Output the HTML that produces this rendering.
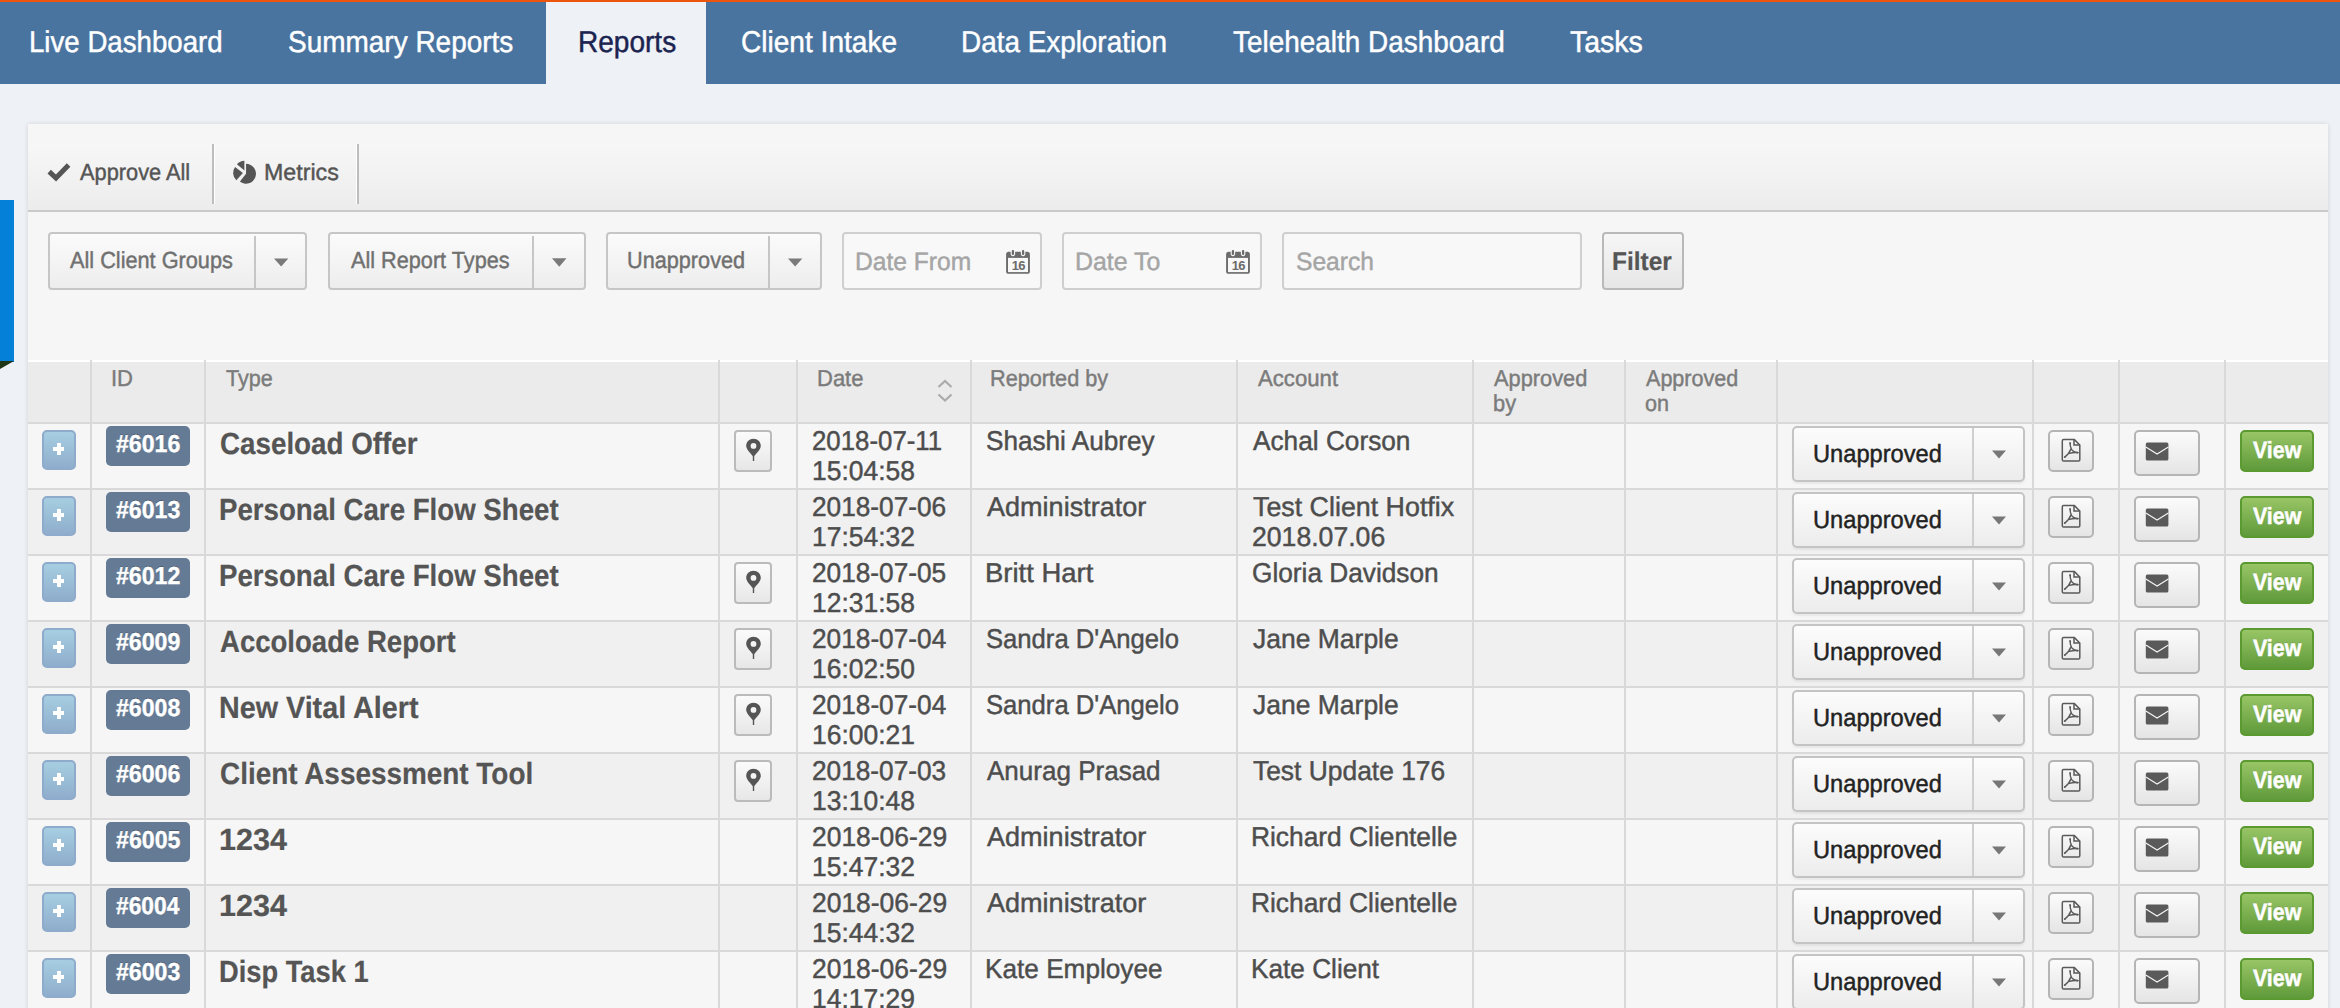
<!DOCTYPE html>
<html><head><meta charset="utf-8"><title>Reports</title>
<style>
html,body{margin:0;padding:0;}
body{width:2340px;height:1008px;overflow:hidden;position:relative;background:#eef1f5;font-family:"Liberation Sans", sans-serif;}
.r{position:absolute;}
.t{position:absolute;white-space:nowrap;line-height:1;transform-origin:0 0;text-rendering:geometricPrecision;}
svg.r{overflow:visible;}
</style></head><body>
<div class="r" style="left:0px;top:0px;width:2340px;height:84px;background:#4a74a0;"></div>
<div class="r" style="left:546px;top:0px;width:160px;height:84px;background:#eef1f5;"></div>
<div class="r" style="left:0px;top:0px;width:2340px;height:2px;background:#ec550b;"></div>
<div id="nav1" class="t" style="left:29.30px;top:28.00px;font-size:30px;color:#ffffff;font-weight:400;transform:scaleX(0.9212);-webkit-text-stroke:0.45px #ffffff;">Live Dashboard</div>
<div id="nav2" class="t" style="left:287.80px;top:28.00px;font-size:30px;color:#ffffff;font-weight:400;transform:scaleX(0.9321);-webkit-text-stroke:0.45px #ffffff;">Summary Reports</div>
<div id="nav3" class="t" style="left:577.60px;top:28.00px;font-size:30px;color:#1b2350;font-weight:400;transform:scaleX(0.9344);-webkit-text-stroke:0.45px #1b2350;">Reports</div>
<div id="nav4" class="t" style="left:741.20px;top:28.00px;font-size:30px;color:#ffffff;font-weight:400;transform:scaleX(0.9359);-webkit-text-stroke:0.45px #ffffff;">Client Intake</div>
<div id="nav5" class="t" style="left:961.00px;top:28.00px;font-size:30px;color:#ffffff;font-weight:400;transform:scaleX(0.9293);-webkit-text-stroke:0.45px #ffffff;">Data Exploration</div>
<div id="nav6" class="t" style="left:1232.80px;top:28.00px;font-size:30px;color:#ffffff;font-weight:400;transform:scaleX(0.9310);-webkit-text-stroke:0.45px #ffffff;">Telehealth Dashboard</div>
<div id="nav7" class="t" style="left:1570.30px;top:28.00px;font-size:30px;color:#ffffff;font-weight:400;transform:scaleX(0.9492);-webkit-text-stroke:0.45px #ffffff;">Tasks</div>
<div class="r" style="left:0px;top:200px;width:14px;height:162px;background:#0580d8;"></div>
<svg class="r" style="left:0;top:361px" width="15" height="9"><polygon points="0,0 14,0 0,8" fill="#1e3516"/></svg>
<div class="r" style="left:28px;top:124px;width:2300px;height:900px;background:#f6f6f6;box-shadow:0 0 5px rgba(0,0,0,0.13);"></div>
<div class="r" style="left:28px;top:144px;width:2300px;height:66px;background:linear-gradient(#f7f7f7,#ececec);"></div>
<div class="r" style="left:28px;top:210px;width:2300px;height:2px;background:#c9c9c9;"></div>
<div class="r" style="left:212px;top:144px;width:2px;height:60px;background:#bdbdbd;"></div>
<div class="r" style="left:214px;top:144px;width:1px;height:60px;background:#ffffff;"></div>
<div class="r" style="left:356px;top:144px;width:1px;height:60px;background:#ffffff;"></div>
<div class="r" style="left:357px;top:144px;width:2px;height:60px;background:#bdbdbd;"></div>
<svg class="r" style="left:47px;top:162px" width="25" height="20" viewBox="0 0 25 20"><polyline points="2.2,9.6 9,16 21.6,3" fill="none" stroke="#555" stroke-width="5"/></svg>
<div id="tb1" class="t" style="left:80.30px;top:160.70px;font-size:23.2px;color:#555;font-weight:400;transform:scaleX(0.9394);-webkit-text-stroke:0.45px #555;">Approve All</div>
<svg class="r" style="left:230px;top:158px" width="30" height="30" viewBox="0 0 30 30"><path d="M16.05 15.75 L16.05 5.85 A9.9 9.9 0 1 1 9.95 23.55 Z" fill="#555"/><path d="M12.90 14.90 L6.34 22.18 A9.8 9.8 0 0 1 5.07 9.00 Z" fill="#555"/><path d="M14.40 12.40 L6.94 6.36 A9.6 9.6 0 0 1 14.38 2.80 Z" fill="#555"/></svg>
<div id="tb2" class="t" style="left:264.20px;top:161.00px;font-size:23.2px;color:#555;font-weight:400;transform:scaleX(1.0005);-webkit-text-stroke:0.45px #555;">Metrics</div>
<div class="r" style="left:48px;top:232px;width:259px;height:58px;box-sizing:border-box;border:2px solid #c6c6c6;border-radius:4px;background:linear-gradient(#fbfbfb,#ededed);"></div>
<div class="r" style="left:254px;top:236px;width:2px;height:54px;background:#c6c6c6;"></div>
<div id="f1" class="t" style="left:69.90px;top:248.70px;font-size:23.2px;color:#707070;font-weight:400;transform:scaleX(0.9361);-webkit-text-stroke:0.45px #707070;">All Client Groups</div>
<svg class="r" style="left:274.0px;top:258px" width="14.3" height="9" viewBox="0 0 14 8"><polygon points="0,0 14,0 7,8" fill="#7a7a7a"/></svg>
<div class="r" style="left:328px;top:232px;width:258px;height:58px;box-sizing:border-box;border:2px solid #c6c6c6;border-radius:4px;background:linear-gradient(#fbfbfb,#ededed);"></div>
<div class="r" style="left:532px;top:236px;width:2px;height:54px;background:#c6c6c6;"></div>
<div id="f2" class="t" style="left:350.50px;top:248.70px;font-size:23.2px;color:#707070;font-weight:400;transform:scaleX(0.9344);-webkit-text-stroke:0.45px #707070;">All Report Types</div>
<svg class="r" style="left:551.5px;top:258px" width="14.5" height="9" viewBox="0 0 14 8"><polygon points="0,0 14,0 7,8" fill="#7a7a7a"/></svg>
<div class="r" style="left:606px;top:232px;width:216px;height:58px;box-sizing:border-box;border:2px solid #c6c6c6;border-radius:4px;background:linear-gradient(#fbfbfb,#ededed);"></div>
<div class="r" style="left:768px;top:236px;width:2px;height:54px;background:#c6c6c6;"></div>
<div id="f3" class="t" style="left:627.20px;top:248.70px;font-size:23.2px;color:#707070;font-weight:400;transform:scaleX(0.9348);-webkit-text-stroke:0.45px #707070;">Unapproved</div>
<svg class="r" style="left:787.7px;top:258px" width="14.3" height="9" viewBox="0 0 14 8"><polygon points="0,0 14,0 7,8" fill="#7a7a7a"/></svg>
<div class="r" style="left:842px;top:232px;width:200px;height:58px;box-sizing:border-box;border:2px solid #cfcfcf;border-radius:4px;background:#f8f8f8;"></div>
<div id="f4" class="t" style="left:855.30px;top:250.01px;font-size:25.2px;color:#a5a5a5;font-weight:400;transform:scaleX(0.9764);-webkit-text-stroke:0.45px #a5a5a5;">Date From</div>
<svg class="r" style="left:1005.9px;top:250px" width="24" height="24" viewBox="0 0 24 24"><rect x="0.1" y="1.8" width="23.8" height="22" rx="2.6" fill="#6b6b6b"/><rect x="2.0" y="7.9" width="20" height="14.2" fill="#f8f8f8"/><rect x="5.2" y="-0.6" width="3.4" height="6.2" rx="1.5" fill="#6b6b6b" stroke="#f8f8f8" stroke-width="1.1"/><rect x="15.4" y="-0.6" width="3.4" height="6.2" rx="1.5" fill="#6b6b6b" stroke="#f8f8f8" stroke-width="1.1"/><text x="12.2" y="19.6" text-anchor="middle" style="font-family:'Liberation Sans',sans-serif;font-weight:700;font-size:13px" fill="#6b6b6b" letter-spacing="-0.8">16</text></svg>
<div class="r" style="left:1062px;top:232px;width:200px;height:58px;box-sizing:border-box;border:2px solid #cfcfcf;border-radius:4px;background:#f8f8f8;"></div>
<div id="f5" class="t" style="left:1075.20px;top:250.01px;font-size:25.2px;color:#a5a5a5;font-weight:400;transform:scaleX(0.9896);-webkit-text-stroke:0.45px #a5a5a5;">Date To</div>
<svg class="r" style="left:1225.8px;top:250px" width="24" height="24" viewBox="0 0 24 24"><rect x="0.1" y="1.8" width="23.8" height="22" rx="2.6" fill="#6b6b6b"/><rect x="2.0" y="7.9" width="20" height="14.2" fill="#f8f8f8"/><rect x="5.2" y="-0.6" width="3.4" height="6.2" rx="1.5" fill="#6b6b6b" stroke="#f8f8f8" stroke-width="1.1"/><rect x="15.4" y="-0.6" width="3.4" height="6.2" rx="1.5" fill="#6b6b6b" stroke="#f8f8f8" stroke-width="1.1"/><text x="12.2" y="19.6" text-anchor="middle" style="font-family:'Liberation Sans',sans-serif;font-weight:700;font-size:13px" fill="#6b6b6b" letter-spacing="-0.8">16</text></svg>
<div class="r" style="left:1282px;top:232px;width:300px;height:58px;box-sizing:border-box;border:2px solid #cfcfcf;border-radius:4px;background:#f8f8f8;"></div>
<div id="f6" class="t" style="left:1295.80px;top:250.01px;font-size:25.2px;color:#a5a5a5;font-weight:400;transform:scaleX(0.9763);-webkit-text-stroke:0.45px #a5a5a5;">Search</div>
<div class="r" style="left:1602px;top:232px;width:82px;height:58px;box-sizing:border-box;border:2px solid #b9b9b9;border-radius:4px;background:linear-gradient(#f6f6f6,#e6e6e6);"></div>
<div id="f7" class="t" style="left:1612.00px;top:250.01px;font-size:25.7px;color:#555;font-weight:700;transform:scaleX(0.9515);-webkit-text-stroke:0.2px #555;">Filter</div>
<div class="r" style="left:28px;top:360px;width:2300px;height:2px;background:#ffffff;"></div>
<div class="r" style="left:28px;top:362px;width:2300px;height:60px;background:#ebebeb;"></div>
<div class="r" style="left:28px;top:424px;width:2300px;height:64px;background:#f6f6f6;"></div>
<div class="r" style="left:28px;top:490px;width:2300px;height:64px;background:#f0f0f0;"></div>
<div class="r" style="left:28px;top:556px;width:2300px;height:64px;background:#f6f6f6;"></div>
<div class="r" style="left:28px;top:622px;width:2300px;height:64px;background:#f0f0f0;"></div>
<div class="r" style="left:28px;top:688px;width:2300px;height:64px;background:#f6f6f6;"></div>
<div class="r" style="left:28px;top:754px;width:2300px;height:64px;background:#f0f0f0;"></div>
<div class="r" style="left:28px;top:820px;width:2300px;height:64px;background:#f6f6f6;"></div>
<div class="r" style="left:28px;top:886px;width:2300px;height:64px;background:#f0f0f0;"></div>
<div class="r" style="left:28px;top:952px;width:2300px;height:64px;background:#f6f6f6;"></div>
<div class="r" style="left:28px;top:422px;width:2300px;height:2px;background:#d9d9d9;"></div>
<div class="r" style="left:28px;top:488px;width:2300px;height:2px;background:#d9d9d9;"></div>
<div class="r" style="left:28px;top:554px;width:2300px;height:2px;background:#d9d9d9;"></div>
<div class="r" style="left:28px;top:620px;width:2300px;height:2px;background:#d9d9d9;"></div>
<div class="r" style="left:28px;top:686px;width:2300px;height:2px;background:#d9d9d9;"></div>
<div class="r" style="left:28px;top:752px;width:2300px;height:2px;background:#d9d9d9;"></div>
<div class="r" style="left:28px;top:818px;width:2300px;height:2px;background:#d9d9d9;"></div>
<div class="r" style="left:28px;top:884px;width:2300px;height:2px;background:#d9d9d9;"></div>
<div class="r" style="left:28px;top:950px;width:2300px;height:2px;background:#d9d9d9;"></div>
<div class="r" style="left:28px;top:1016px;width:2300px;height:2px;background:#d9d9d9;"></div>
<div class="r" style="left:90px;top:360px;width:2px;height:700px;background:#d9d9d9;"></div>
<div class="r" style="left:204px;top:360px;width:2px;height:700px;background:#d9d9d9;"></div>
<div class="r" style="left:718px;top:360px;width:2px;height:700px;background:#d9d9d9;"></div>
<div class="r" style="left:796px;top:360px;width:2px;height:700px;background:#d9d9d9;"></div>
<div class="r" style="left:970px;top:360px;width:2px;height:700px;background:#d9d9d9;"></div>
<div class="r" style="left:1236px;top:360px;width:2px;height:700px;background:#d9d9d9;"></div>
<div class="r" style="left:1472px;top:360px;width:2px;height:700px;background:#d9d9d9;"></div>
<div class="r" style="left:1624px;top:360px;width:2px;height:700px;background:#d9d9d9;"></div>
<div class="r" style="left:1776px;top:360px;width:2px;height:700px;background:#d9d9d9;"></div>
<div class="r" style="left:2032px;top:360px;width:2px;height:700px;background:#d9d9d9;"></div>
<div class="r" style="left:2118px;top:360px;width:2px;height:700px;background:#d9d9d9;"></div>
<div class="r" style="left:2224px;top:360px;width:2px;height:700px;background:#d9d9d9;"></div>
<div id="h1" class="t" style="left:111.00px;top:366.70px;font-size:23px;color:#7b7b7b;font-weight:400;transform:scaleX(0.9551);-webkit-text-stroke:0.45px #7b7b7b;">ID</div>
<div id="h2" class="t" style="left:226.00px;top:366.70px;font-size:23px;color:#7b7b7b;font-weight:400;transform:scaleX(0.9386);-webkit-text-stroke:0.45px #7b7b7b;">Type</div>
<div id="h3" class="t" style="left:817.00px;top:366.70px;font-size:23px;color:#7b7b7b;font-weight:400;transform:scaleX(0.9560);-webkit-text-stroke:0.45px #7b7b7b;">Date</div>
<div id="h4" class="t" style="left:990.30px;top:366.70px;font-size:23px;color:#7b7b7b;font-weight:400;transform:scaleX(0.9429);-webkit-text-stroke:0.45px #7b7b7b;">Reported by</div>
<div id="h5" class="t" style="left:1258.40px;top:366.70px;font-size:23px;color:#7b7b7b;font-weight:400;transform:scaleX(0.9638);-webkit-text-stroke:0.45px #7b7b7b;">Account</div>
<div id="h6" class="t" style="left:1494.00px;top:366.70px;font-size:23px;color:#7b7b7b;font-weight:400;transform:scaleX(0.9484);-webkit-text-stroke:0.45px #7b7b7b;">Approved</div>
<div id="h6b" class="t" style="left:1493.00px;top:392.20px;font-size:23px;color:#7b7b7b;font-weight:400;transform:scaleX(0.9484);-webkit-text-stroke:0.45px #7b7b7b;">by</div>
<div id="h7" class="t" style="left:1646.40px;top:366.70px;font-size:23px;color:#7b7b7b;font-weight:400;transform:scaleX(0.9375);-webkit-text-stroke:0.45px #7b7b7b;">Approved</div>
<div id="h7b" class="t" style="left:1645.40px;top:392.20px;font-size:23px;color:#7b7b7b;font-weight:400;transform:scaleX(0.9375);-webkit-text-stroke:0.45px #7b7b7b;">on</div>
<svg class="r" style="left:937px;top:379px" width="16" height="24" viewBox="0 0 16 24"><polyline points="1.5,8 8,2 14.5,8" fill="none" stroke="#ababab" stroke-width="2.2"/><polyline points="1.5,15.5 8,21.5 14.5,15.5" fill="none" stroke="#ababab" stroke-width="2.2"/></svg>
<div class="r" style="left:42px;top:430px;width:34px;height:40px;box-sizing:border-box;border:2px solid #8eabcb;border-radius:5px;background:linear-gradient(#a6cee1,#8fadcc);"></div>
<div class="r" style="left:53.4px;top:447.2px;width:11px;height:3.6px;background:#fff;"></div>
<div class="r" style="left:57.2px;top:443.1px;width:3.6px;height:11.8px;background:#fff;"></div>
<div class="r" style="left:106px;top:426px;width:84px;height:40px;background:#657b95;border-radius:5px;"></div>
<div id="b0" class="t" style="left:116.10px;top:433.00px;font-size:24.6px;color:#ffffff;font-weight:700;transform:scaleX(0.9409);-webkit-text-stroke:0.35px #ffffff;text-shadow:0 -1px 0 rgba(0,0,0,0.25);">#6016</div>
<div id="ty0" class="t" style="left:220.00px;top:428.71px;font-size:30.6px;color:#555;font-weight:700;transform:scaleX(0.9079);-webkit-text-stroke:0.2px #555;">Caseload Offer</div>
<div class="r" style="left:734px;top:430px;width:38px;height:42px;box-sizing:border-box;border:2px solid #bbb;border-radius:4px;background:linear-gradient(#fbfbfb,#e7e7e7);"></div>
<svg class="r" style="left:745px;top:438px" width="17" height="24" viewBox="0 0 17 24"><path d="M8.5 0.8 C4.4 0.8 1.2 3.9 1.2 7.9 C1.2 11.5 6.2 15.6 8.5 19 C10.8 15.6 15.8 11.5 15.8 7.9 C15.8 3.9 12.6 0.8 8.5 0.8 Z M8.5 5.0 A2.9 2.9 0 1 1 8.5 10.8 A2.9 2.9 0 1 1 8.5 5.0 Z" fill="#555" fill-rule="evenodd"/><rect x="7.8" y="16" width="1.4" height="7" fill="#555"/></svg>
<div id="d1_0" class="t" style="left:811.80px;top:426.81px;font-size:27.2px;color:#4d4d4d;font-weight:400;transform:scaleX(0.9497);-webkit-text-stroke:0.45px #4d4d4d;">2018-07-11</div>
<div id="d2_0" class="t" style="left:811.70px;top:456.71px;font-size:27.2px;color:#4d4d4d;font-weight:400;transform:scaleX(0.9720);-webkit-text-stroke:0.45px #4d4d4d;">15:04:58</div>
<div id="rp0" class="t" style="left:985.80px;top:426.81px;font-size:27.2px;color:#4d4d4d;font-weight:400;transform:scaleX(0.9615);-webkit-text-stroke:0.45px #4d4d4d;">Shashi Aubrey</div>
<div id="ac0" class="t" style="left:1253.10px;top:426.81px;font-size:27.2px;color:#4d4d4d;font-weight:400;transform:scaleX(0.9646);-webkit-text-stroke:0.45px #4d4d4d;">Achal Corson</div>
<div class="r" style="left:1792px;top:426px;width:233px;height:56px;box-sizing:border-box;border:2px solid #c4c4c4;border-radius:5px;background:linear-gradient(#fcfcfc,#ececec);box-shadow:0 2px 2px rgba(0,0,0,0.06);"></div>
<div class="r" style="left:1972px;top:428px;width:2px;height:52px;background:#cfcfcf;"></div>
<div id="st0" class="t" style="left:1813.00px;top:442.71px;font-size:24.75px;color:#222;font-weight:400;transform:scaleX(0.9557);-webkit-text-stroke:0.45px #222;">Unapproved</div>
<svg class="r" style="left:1992px;top:449.6px" width="14" height="9" viewBox="0 0 14 8"><polygon points="0,0 14,0 7,8" fill="#777"/></svg>
<div class="r" style="left:2048px;top:430px;width:46px;height:42px;box-sizing:border-box;border:2px solid #b5b5b5;border-radius:5px;background:linear-gradient(#fbfbfb,#e5e5e5);"></div>
<svg class="r" style="left:2061px;top:438px" width="21" height="25" viewBox="0 0 21 25"><path d="M2.6 1.6 H13.4 L18.8 7.0 V21.7 A1.3 1.3 0 0 1 17.5 23.0 H2.6 A1.3 1.3 0 0 1 1.3 21.7 V2.9 A1.3 1.3 0 0 1 2.6 1.6 Z" fill="none" stroke="#5a5a5a" stroke-width="1.5"/><path d="M13.0 1.6 V7.0 H18.8" fill="none" stroke="#5a5a5a" stroke-width="1.5"/><path d="M9.2 4.8 C8.9 7 9.6 9.6 10.6 11.5 C11.8 13.4 14 14.5 17.0 14.6 M16.8 14.7 C13.5 14.2 10.5 14.8 7.3 15.6 M10.0 10.8 C9 13.6 7.2 16.6 3.6 19.2" fill="none" stroke="#5a5a5a" stroke-width="1.4"/><ellipse cx="9.1" cy="5.2" rx="0.9" ry="1.1" fill="#5a5a5a"/><ellipse cx="16.6" cy="14.6" rx="1.3" ry="0.9" fill="#5a5a5a"/><ellipse cx="4.0" cy="18.9" rx="1.2" ry="0.9" transform="rotate(-40 4 18.9)" fill="#5a5a5a"/></svg>
<div class="r" style="left:2134px;top:430px;width:66px;height:46px;box-sizing:border-box;border:2px solid #b5b5b5;border-radius:5px;background:linear-gradient(#fbfbfb,#e5e5e5);"></div>
<svg class="r" style="left:2145px;top:441.5px" width="24" height="19" viewBox="0 0 24 19"><rect x="0.8" y="0.5" width="22.6" height="18" rx="1.6" fill="#5a5a5a"/><polyline points="0.8,5 12.1,12 23.4,5" fill="none" stroke="#f3f3f3" stroke-width="1.2"/></svg>
<div class="r" style="left:2240px;top:430px;width:74px;height:42px;box-sizing:border-box;border:2px solid #5a9a31;border-radius:5px;background:linear-gradient(#98c566,#5f9a3a);"></div>
<div id="v0" class="t" style="left:2252.60px;top:438.91px;font-size:23.5px;color:#ffffff;font-weight:700;transform:scaleX(0.9087);-webkit-text-stroke:0.5px #ffffff;text-shadow:0 -1px 0 rgba(0,0,0,0.15);">View</div>
<div class="r" style="left:42px;top:496px;width:34px;height:40px;box-sizing:border-box;border:2px solid #8eabcb;border-radius:5px;background:linear-gradient(#a6cee1,#8fadcc);"></div>
<div class="r" style="left:53.4px;top:513.2px;width:11px;height:3.6px;background:#fff;"></div>
<div class="r" style="left:57.2px;top:509.1px;width:3.6px;height:11.8px;background:#fff;"></div>
<div class="r" style="left:106px;top:492px;width:84px;height:40px;background:#657b95;border-radius:5px;"></div>
<div id="b1" class="t" style="left:116.10px;top:499.00px;font-size:24.6px;color:#ffffff;font-weight:700;transform:scaleX(0.9409);-webkit-text-stroke:0.35px #ffffff;text-shadow:0 -1px 0 rgba(0,0,0,0.25);">#6013</div>
<div id="ty1" class="t" style="left:219.00px;top:494.71px;font-size:30.6px;color:#555;font-weight:700;transform:scaleX(0.9040);-webkit-text-stroke:0.2px #555;">Personal Care Flow Sheet</div>
<div id="d1_1" class="t" style="left:811.80px;top:492.81px;font-size:27.2px;color:#4d4d4d;font-weight:400;transform:scaleX(0.9649);-webkit-text-stroke:0.45px #4d4d4d;">2018-07-06</div>
<div id="d2_1" class="t" style="left:811.70px;top:522.71px;font-size:27.2px;color:#4d4d4d;font-weight:400;transform:scaleX(0.9723);-webkit-text-stroke:0.45px #4d4d4d;">17:54:32</div>
<div id="rp1" class="t" style="left:986.80px;top:492.81px;font-size:27.2px;color:#4d4d4d;font-weight:400;transform:scaleX(0.9945);-webkit-text-stroke:0.45px #4d4d4d;">Administrator</div>
<div id="ac1" class="t" style="left:1253.10px;top:492.81px;font-size:27.2px;color:#4d4d4d;font-weight:400;transform:scaleX(0.9861);-webkit-text-stroke:0.45px #4d4d4d;">Test Client Hotfix</div>
<div id="ac2_1" class="t" style="left:1252.10px;top:522.71px;font-size:27.2px;color:#4d4d4d;font-weight:400;transform:scaleX(0.9790);-webkit-text-stroke:0.45px #4d4d4d;">2018.07.06</div>
<div class="r" style="left:1792px;top:492px;width:233px;height:56px;box-sizing:border-box;border:2px solid #c4c4c4;border-radius:5px;background:linear-gradient(#fcfcfc,#ececec);box-shadow:0 2px 2px rgba(0,0,0,0.06);"></div>
<div class="r" style="left:1972px;top:494px;width:2px;height:52px;background:#cfcfcf;"></div>
<div id="st1" class="t" style="left:1813.00px;top:508.71px;font-size:24.75px;color:#222;font-weight:400;transform:scaleX(0.9557);-webkit-text-stroke:0.45px #222;">Unapproved</div>
<svg class="r" style="left:1992px;top:515.6px" width="14" height="9" viewBox="0 0 14 8"><polygon points="0,0 14,0 7,8" fill="#777"/></svg>
<div class="r" style="left:2048px;top:496px;width:46px;height:42px;box-sizing:border-box;border:2px solid #b5b5b5;border-radius:5px;background:linear-gradient(#fbfbfb,#e5e5e5);"></div>
<svg class="r" style="left:2061px;top:504px" width="21" height="25" viewBox="0 0 21 25"><path d="M2.6 1.6 H13.4 L18.8 7.0 V21.7 A1.3 1.3 0 0 1 17.5 23.0 H2.6 A1.3 1.3 0 0 1 1.3 21.7 V2.9 A1.3 1.3 0 0 1 2.6 1.6 Z" fill="none" stroke="#5a5a5a" stroke-width="1.5"/><path d="M13.0 1.6 V7.0 H18.8" fill="none" stroke="#5a5a5a" stroke-width="1.5"/><path d="M9.2 4.8 C8.9 7 9.6 9.6 10.6 11.5 C11.8 13.4 14 14.5 17.0 14.6 M16.8 14.7 C13.5 14.2 10.5 14.8 7.3 15.6 M10.0 10.8 C9 13.6 7.2 16.6 3.6 19.2" fill="none" stroke="#5a5a5a" stroke-width="1.4"/><ellipse cx="9.1" cy="5.2" rx="0.9" ry="1.1" fill="#5a5a5a"/><ellipse cx="16.6" cy="14.6" rx="1.3" ry="0.9" fill="#5a5a5a"/><ellipse cx="4.0" cy="18.9" rx="1.2" ry="0.9" transform="rotate(-40 4 18.9)" fill="#5a5a5a"/></svg>
<div class="r" style="left:2134px;top:496px;width:66px;height:46px;box-sizing:border-box;border:2px solid #b5b5b5;border-radius:5px;background:linear-gradient(#fbfbfb,#e5e5e5);"></div>
<svg class="r" style="left:2145px;top:507.5px" width="24" height="19" viewBox="0 0 24 19"><rect x="0.8" y="0.5" width="22.6" height="18" rx="1.6" fill="#5a5a5a"/><polyline points="0.8,5 12.1,12 23.4,5" fill="none" stroke="#f3f3f3" stroke-width="1.2"/></svg>
<div class="r" style="left:2240px;top:496px;width:74px;height:42px;box-sizing:border-box;border:2px solid #5a9a31;border-radius:5px;background:linear-gradient(#98c566,#5f9a3a);"></div>
<div id="v1" class="t" style="left:2252.60px;top:504.91px;font-size:23.5px;color:#ffffff;font-weight:700;transform:scaleX(0.9087);-webkit-text-stroke:0.5px #ffffff;text-shadow:0 -1px 0 rgba(0,0,0,0.15);">View</div>
<div class="r" style="left:42px;top:562px;width:34px;height:40px;box-sizing:border-box;border:2px solid #8eabcb;border-radius:5px;background:linear-gradient(#a6cee1,#8fadcc);"></div>
<div class="r" style="left:53.4px;top:579.2px;width:11px;height:3.6px;background:#fff;"></div>
<div class="r" style="left:57.2px;top:575.1px;width:3.6px;height:11.8px;background:#fff;"></div>
<div class="r" style="left:106px;top:558px;width:84px;height:40px;background:#657b95;border-radius:5px;"></div>
<div id="b2" class="t" style="left:116.10px;top:565.00px;font-size:24.6px;color:#ffffff;font-weight:700;transform:scaleX(0.9411);-webkit-text-stroke:0.35px #ffffff;text-shadow:0 -1px 0 rgba(0,0,0,0.25);">#6012</div>
<div id="ty2" class="t" style="left:219.00px;top:560.71px;font-size:30.6px;color:#555;font-weight:700;transform:scaleX(0.9040);-webkit-text-stroke:0.2px #555;">Personal Care Flow Sheet</div>
<div class="r" style="left:734px;top:562px;width:38px;height:42px;box-sizing:border-box;border:2px solid #bbb;border-radius:4px;background:linear-gradient(#fbfbfb,#e7e7e7);"></div>
<svg class="r" style="left:745px;top:570px" width="17" height="24" viewBox="0 0 17 24"><path d="M8.5 0.8 C4.4 0.8 1.2 3.9 1.2 7.9 C1.2 11.5 6.2 15.6 8.5 19 C10.8 15.6 15.8 11.5 15.8 7.9 C15.8 3.9 12.6 0.8 8.5 0.8 Z M8.5 5.0 A2.9 2.9 0 1 1 8.5 10.8 A2.9 2.9 0 1 1 8.5 5.0 Z" fill="#555" fill-rule="evenodd"/><rect x="7.8" y="16" width="1.4" height="7" fill="#555"/></svg>
<div id="d1_2" class="t" style="left:811.80px;top:558.81px;font-size:27.2px;color:#4d4d4d;font-weight:400;transform:scaleX(0.9649);-webkit-text-stroke:0.45px #4d4d4d;">2018-07-05</div>
<div id="d2_2" class="t" style="left:811.70px;top:588.71px;font-size:27.2px;color:#4d4d4d;font-weight:400;transform:scaleX(0.9720);-webkit-text-stroke:0.45px #4d4d4d;">12:31:58</div>
<div id="rp2" class="t" style="left:984.80px;top:558.81px;font-size:27.2px;color:#4d4d4d;font-weight:400;transform:scaleX(1.0103);-webkit-text-stroke:0.45px #4d4d4d;">Britt Hart</div>
<div id="ac2" class="t" style="left:1252.10px;top:558.81px;font-size:27.2px;color:#4d4d4d;font-weight:400;transform:scaleX(0.9650);-webkit-text-stroke:0.45px #4d4d4d;">Gloria Davidson</div>
<div class="r" style="left:1792px;top:558px;width:233px;height:56px;box-sizing:border-box;border:2px solid #c4c4c4;border-radius:5px;background:linear-gradient(#fcfcfc,#ececec);box-shadow:0 2px 2px rgba(0,0,0,0.06);"></div>
<div class="r" style="left:1972px;top:560px;width:2px;height:52px;background:#cfcfcf;"></div>
<div id="st2" class="t" style="left:1813.00px;top:574.71px;font-size:24.75px;color:#222;font-weight:400;transform:scaleX(0.9557);-webkit-text-stroke:0.45px #222;">Unapproved</div>
<svg class="r" style="left:1992px;top:581.6px" width="14" height="9" viewBox="0 0 14 8"><polygon points="0,0 14,0 7,8" fill="#777"/></svg>
<div class="r" style="left:2048px;top:562px;width:46px;height:42px;box-sizing:border-box;border:2px solid #b5b5b5;border-radius:5px;background:linear-gradient(#fbfbfb,#e5e5e5);"></div>
<svg class="r" style="left:2061px;top:570px" width="21" height="25" viewBox="0 0 21 25"><path d="M2.6 1.6 H13.4 L18.8 7.0 V21.7 A1.3 1.3 0 0 1 17.5 23.0 H2.6 A1.3 1.3 0 0 1 1.3 21.7 V2.9 A1.3 1.3 0 0 1 2.6 1.6 Z" fill="none" stroke="#5a5a5a" stroke-width="1.5"/><path d="M13.0 1.6 V7.0 H18.8" fill="none" stroke="#5a5a5a" stroke-width="1.5"/><path d="M9.2 4.8 C8.9 7 9.6 9.6 10.6 11.5 C11.8 13.4 14 14.5 17.0 14.6 M16.8 14.7 C13.5 14.2 10.5 14.8 7.3 15.6 M10.0 10.8 C9 13.6 7.2 16.6 3.6 19.2" fill="none" stroke="#5a5a5a" stroke-width="1.4"/><ellipse cx="9.1" cy="5.2" rx="0.9" ry="1.1" fill="#5a5a5a"/><ellipse cx="16.6" cy="14.6" rx="1.3" ry="0.9" fill="#5a5a5a"/><ellipse cx="4.0" cy="18.9" rx="1.2" ry="0.9" transform="rotate(-40 4 18.9)" fill="#5a5a5a"/></svg>
<div class="r" style="left:2134px;top:562px;width:66px;height:46px;box-sizing:border-box;border:2px solid #b5b5b5;border-radius:5px;background:linear-gradient(#fbfbfb,#e5e5e5);"></div>
<svg class="r" style="left:2145px;top:573.5px" width="24" height="19" viewBox="0 0 24 19"><rect x="0.8" y="0.5" width="22.6" height="18" rx="1.6" fill="#5a5a5a"/><polyline points="0.8,5 12.1,12 23.4,5" fill="none" stroke="#f3f3f3" stroke-width="1.2"/></svg>
<div class="r" style="left:2240px;top:562px;width:74px;height:42px;box-sizing:border-box;border:2px solid #5a9a31;border-radius:5px;background:linear-gradient(#98c566,#5f9a3a);"></div>
<div id="v2" class="t" style="left:2252.60px;top:570.91px;font-size:23.5px;color:#ffffff;font-weight:700;transform:scaleX(0.9087);-webkit-text-stroke:0.5px #ffffff;text-shadow:0 -1px 0 rgba(0,0,0,0.15);">View</div>
<div class="r" style="left:42px;top:628px;width:34px;height:40px;box-sizing:border-box;border:2px solid #8eabcb;border-radius:5px;background:linear-gradient(#a6cee1,#8fadcc);"></div>
<div class="r" style="left:53.4px;top:645.2px;width:11px;height:3.6px;background:#fff;"></div>
<div class="r" style="left:57.2px;top:641.1px;width:3.6px;height:11.8px;background:#fff;"></div>
<div class="r" style="left:106px;top:624px;width:84px;height:40px;background:#657b95;border-radius:5px;"></div>
<div id="b3" class="t" style="left:116.10px;top:631.00px;font-size:24.6px;color:#ffffff;font-weight:700;transform:scaleX(0.9411);-webkit-text-stroke:0.35px #ffffff;text-shadow:0 -1px 0 rgba(0,0,0,0.25);">#6009</div>
<div id="ty3" class="t" style="left:220.00px;top:626.71px;font-size:30.6px;color:#555;font-weight:700;transform:scaleX(0.9004);-webkit-text-stroke:0.2px #555;">Accoloade Report</div>
<div class="r" style="left:734px;top:628px;width:38px;height:42px;box-sizing:border-box;border:2px solid #bbb;border-radius:4px;background:linear-gradient(#fbfbfb,#e7e7e7);"></div>
<svg class="r" style="left:745px;top:636px" width="17" height="24" viewBox="0 0 17 24"><path d="M8.5 0.8 C4.4 0.8 1.2 3.9 1.2 7.9 C1.2 11.5 6.2 15.6 8.5 19 C10.8 15.6 15.8 11.5 15.8 7.9 C15.8 3.9 12.6 0.8 8.5 0.8 Z M8.5 5.0 A2.9 2.9 0 1 1 8.5 10.8 A2.9 2.9 0 1 1 8.5 5.0 Z" fill="#555" fill-rule="evenodd"/><rect x="7.8" y="16" width="1.4" height="7" fill="#555"/></svg>
<div id="d1_3" class="t" style="left:811.80px;top:624.81px;font-size:27.2px;color:#4d4d4d;font-weight:400;transform:scaleX(0.9653);-webkit-text-stroke:0.45px #4d4d4d;">2018-07-04</div>
<div id="d2_3" class="t" style="left:811.70px;top:654.71px;font-size:27.2px;color:#4d4d4d;font-weight:400;transform:scaleX(0.9720);-webkit-text-stroke:0.45px #4d4d4d;">16:02:50</div>
<div id="rp3" class="t" style="left:985.80px;top:624.81px;font-size:27.2px;color:#4d4d4d;font-weight:400;transform:scaleX(0.9429);-webkit-text-stroke:0.45px #4d4d4d;">Sandra D'Angelo</div>
<div id="ac3" class="t" style="left:1253.10px;top:624.81px;font-size:27.2px;color:#4d4d4d;font-weight:400;transform:scaleX(0.9741);-webkit-text-stroke:0.45px #4d4d4d;">Jane Marple</div>
<div class="r" style="left:1792px;top:624px;width:233px;height:56px;box-sizing:border-box;border:2px solid #c4c4c4;border-radius:5px;background:linear-gradient(#fcfcfc,#ececec);box-shadow:0 2px 2px rgba(0,0,0,0.06);"></div>
<div class="r" style="left:1972px;top:626px;width:2px;height:52px;background:#cfcfcf;"></div>
<div id="st3" class="t" style="left:1813.00px;top:640.71px;font-size:24.75px;color:#222;font-weight:400;transform:scaleX(0.9557);-webkit-text-stroke:0.45px #222;">Unapproved</div>
<svg class="r" style="left:1992px;top:647.6px" width="14" height="9" viewBox="0 0 14 8"><polygon points="0,0 14,0 7,8" fill="#777"/></svg>
<div class="r" style="left:2048px;top:628px;width:46px;height:42px;box-sizing:border-box;border:2px solid #b5b5b5;border-radius:5px;background:linear-gradient(#fbfbfb,#e5e5e5);"></div>
<svg class="r" style="left:2061px;top:636px" width="21" height="25" viewBox="0 0 21 25"><path d="M2.6 1.6 H13.4 L18.8 7.0 V21.7 A1.3 1.3 0 0 1 17.5 23.0 H2.6 A1.3 1.3 0 0 1 1.3 21.7 V2.9 A1.3 1.3 0 0 1 2.6 1.6 Z" fill="none" stroke="#5a5a5a" stroke-width="1.5"/><path d="M13.0 1.6 V7.0 H18.8" fill="none" stroke="#5a5a5a" stroke-width="1.5"/><path d="M9.2 4.8 C8.9 7 9.6 9.6 10.6 11.5 C11.8 13.4 14 14.5 17.0 14.6 M16.8 14.7 C13.5 14.2 10.5 14.8 7.3 15.6 M10.0 10.8 C9 13.6 7.2 16.6 3.6 19.2" fill="none" stroke="#5a5a5a" stroke-width="1.4"/><ellipse cx="9.1" cy="5.2" rx="0.9" ry="1.1" fill="#5a5a5a"/><ellipse cx="16.6" cy="14.6" rx="1.3" ry="0.9" fill="#5a5a5a"/><ellipse cx="4.0" cy="18.9" rx="1.2" ry="0.9" transform="rotate(-40 4 18.9)" fill="#5a5a5a"/></svg>
<div class="r" style="left:2134px;top:628px;width:66px;height:46px;box-sizing:border-box;border:2px solid #b5b5b5;border-radius:5px;background:linear-gradient(#fbfbfb,#e5e5e5);"></div>
<svg class="r" style="left:2145px;top:639.5px" width="24" height="19" viewBox="0 0 24 19"><rect x="0.8" y="0.5" width="22.6" height="18" rx="1.6" fill="#5a5a5a"/><polyline points="0.8,5 12.1,12 23.4,5" fill="none" stroke="#f3f3f3" stroke-width="1.2"/></svg>
<div class="r" style="left:2240px;top:628px;width:74px;height:42px;box-sizing:border-box;border:2px solid #5a9a31;border-radius:5px;background:linear-gradient(#98c566,#5f9a3a);"></div>
<div id="v3" class="t" style="left:2252.60px;top:636.91px;font-size:23.5px;color:#ffffff;font-weight:700;transform:scaleX(0.9087);-webkit-text-stroke:0.5px #ffffff;text-shadow:0 -1px 0 rgba(0,0,0,0.15);">View</div>
<div class="r" style="left:42px;top:694px;width:34px;height:40px;box-sizing:border-box;border:2px solid #8eabcb;border-radius:5px;background:linear-gradient(#a6cee1,#8fadcc);"></div>
<div class="r" style="left:53.4px;top:711.2px;width:11px;height:3.6px;background:#fff;"></div>
<div class="r" style="left:57.2px;top:707.1px;width:3.6px;height:11.8px;background:#fff;"></div>
<div class="r" style="left:106px;top:690px;width:84px;height:40px;background:#657b95;border-radius:5px;"></div>
<div id="b4" class="t" style="left:116.10px;top:697.00px;font-size:24.6px;color:#ffffff;font-weight:700;transform:scaleX(0.9409);-webkit-text-stroke:0.35px #ffffff;text-shadow:0 -1px 0 rgba(0,0,0,0.25);">#6008</div>
<div id="ty4" class="t" style="left:219.00px;top:692.71px;font-size:30.6px;color:#555;font-weight:700;transform:scaleX(0.9384);-webkit-text-stroke:0.2px #555;">New Vital Alert</div>
<div class="r" style="left:734px;top:694px;width:38px;height:42px;box-sizing:border-box;border:2px solid #bbb;border-radius:4px;background:linear-gradient(#fbfbfb,#e7e7e7);"></div>
<svg class="r" style="left:745px;top:702px" width="17" height="24" viewBox="0 0 17 24"><path d="M8.5 0.8 C4.4 0.8 1.2 3.9 1.2 7.9 C1.2 11.5 6.2 15.6 8.5 19 C10.8 15.6 15.8 11.5 15.8 7.9 C15.8 3.9 12.6 0.8 8.5 0.8 Z M8.5 5.0 A2.9 2.9 0 1 1 8.5 10.8 A2.9 2.9 0 1 1 8.5 5.0 Z" fill="#555" fill-rule="evenodd"/><rect x="7.8" y="16" width="1.4" height="7" fill="#555"/></svg>
<div id="d1_4" class="t" style="left:811.80px;top:690.81px;font-size:27.2px;color:#4d4d4d;font-weight:400;transform:scaleX(0.9653);-webkit-text-stroke:0.45px #4d4d4d;">2018-07-04</div>
<div id="d2_4" class="t" style="left:811.70px;top:720.71px;font-size:27.2px;color:#4d4d4d;font-weight:400;transform:scaleX(0.9722);-webkit-text-stroke:0.45px #4d4d4d;">16:00:21</div>
<div id="rp4" class="t" style="left:985.80px;top:690.81px;font-size:27.2px;color:#4d4d4d;font-weight:400;transform:scaleX(0.9429);-webkit-text-stroke:0.45px #4d4d4d;">Sandra D'Angelo</div>
<div id="ac4" class="t" style="left:1253.10px;top:690.81px;font-size:27.2px;color:#4d4d4d;font-weight:400;transform:scaleX(0.9741);-webkit-text-stroke:0.45px #4d4d4d;">Jane Marple</div>
<div class="r" style="left:1792px;top:690px;width:233px;height:56px;box-sizing:border-box;border:2px solid #c4c4c4;border-radius:5px;background:linear-gradient(#fcfcfc,#ececec);box-shadow:0 2px 2px rgba(0,0,0,0.06);"></div>
<div class="r" style="left:1972px;top:692px;width:2px;height:52px;background:#cfcfcf;"></div>
<div id="st4" class="t" style="left:1813.00px;top:706.71px;font-size:24.75px;color:#222;font-weight:400;transform:scaleX(0.9557);-webkit-text-stroke:0.45px #222;">Unapproved</div>
<svg class="r" style="left:1992px;top:713.6px" width="14" height="9" viewBox="0 0 14 8"><polygon points="0,0 14,0 7,8" fill="#777"/></svg>
<div class="r" style="left:2048px;top:694px;width:46px;height:42px;box-sizing:border-box;border:2px solid #b5b5b5;border-radius:5px;background:linear-gradient(#fbfbfb,#e5e5e5);"></div>
<svg class="r" style="left:2061px;top:702px" width="21" height="25" viewBox="0 0 21 25"><path d="M2.6 1.6 H13.4 L18.8 7.0 V21.7 A1.3 1.3 0 0 1 17.5 23.0 H2.6 A1.3 1.3 0 0 1 1.3 21.7 V2.9 A1.3 1.3 0 0 1 2.6 1.6 Z" fill="none" stroke="#5a5a5a" stroke-width="1.5"/><path d="M13.0 1.6 V7.0 H18.8" fill="none" stroke="#5a5a5a" stroke-width="1.5"/><path d="M9.2 4.8 C8.9 7 9.6 9.6 10.6 11.5 C11.8 13.4 14 14.5 17.0 14.6 M16.8 14.7 C13.5 14.2 10.5 14.8 7.3 15.6 M10.0 10.8 C9 13.6 7.2 16.6 3.6 19.2" fill="none" stroke="#5a5a5a" stroke-width="1.4"/><ellipse cx="9.1" cy="5.2" rx="0.9" ry="1.1" fill="#5a5a5a"/><ellipse cx="16.6" cy="14.6" rx="1.3" ry="0.9" fill="#5a5a5a"/><ellipse cx="4.0" cy="18.9" rx="1.2" ry="0.9" transform="rotate(-40 4 18.9)" fill="#5a5a5a"/></svg>
<div class="r" style="left:2134px;top:694px;width:66px;height:46px;box-sizing:border-box;border:2px solid #b5b5b5;border-radius:5px;background:linear-gradient(#fbfbfb,#e5e5e5);"></div>
<svg class="r" style="left:2145px;top:705.5px" width="24" height="19" viewBox="0 0 24 19"><rect x="0.8" y="0.5" width="22.6" height="18" rx="1.6" fill="#5a5a5a"/><polyline points="0.8,5 12.1,12 23.4,5" fill="none" stroke="#f3f3f3" stroke-width="1.2"/></svg>
<div class="r" style="left:2240px;top:694px;width:74px;height:42px;box-sizing:border-box;border:2px solid #5a9a31;border-radius:5px;background:linear-gradient(#98c566,#5f9a3a);"></div>
<div id="v4" class="t" style="left:2252.60px;top:702.91px;font-size:23.5px;color:#ffffff;font-weight:700;transform:scaleX(0.9087);-webkit-text-stroke:0.5px #ffffff;text-shadow:0 -1px 0 rgba(0,0,0,0.15);">View</div>
<div class="r" style="left:42px;top:760px;width:34px;height:40px;box-sizing:border-box;border:2px solid #8eabcb;border-radius:5px;background:linear-gradient(#a6cee1,#8fadcc);"></div>
<div class="r" style="left:53.4px;top:777.2px;width:11px;height:3.6px;background:#fff;"></div>
<div class="r" style="left:57.2px;top:773.1px;width:3.6px;height:11.8px;background:#fff;"></div>
<div class="r" style="left:106px;top:756px;width:84px;height:40px;background:#657b95;border-radius:5px;"></div>
<div id="b5" class="t" style="left:116.10px;top:763.00px;font-size:24.6px;color:#ffffff;font-weight:700;transform:scaleX(0.9409);-webkit-text-stroke:0.35px #ffffff;text-shadow:0 -1px 0 rgba(0,0,0,0.25);">#6006</div>
<div id="ty5" class="t" style="left:220.00px;top:758.71px;font-size:30.6px;color:#555;font-weight:700;transform:scaleX(0.9120);-webkit-text-stroke:0.2px #555;">Client Assessment Tool</div>
<div class="r" style="left:734px;top:760px;width:38px;height:42px;box-sizing:border-box;border:2px solid #bbb;border-radius:4px;background:linear-gradient(#fbfbfb,#e7e7e7);"></div>
<svg class="r" style="left:745px;top:768px" width="17" height="24" viewBox="0 0 17 24"><path d="M8.5 0.8 C4.4 0.8 1.2 3.9 1.2 7.9 C1.2 11.5 6.2 15.6 8.5 19 C10.8 15.6 15.8 11.5 15.8 7.9 C15.8 3.9 12.6 0.8 8.5 0.8 Z M8.5 5.0 A2.9 2.9 0 1 1 8.5 10.8 A2.9 2.9 0 1 1 8.5 5.0 Z" fill="#555" fill-rule="evenodd"/><rect x="7.8" y="16" width="1.4" height="7" fill="#555"/></svg>
<div id="d1_5" class="t" style="left:811.80px;top:756.81px;font-size:27.2px;color:#4d4d4d;font-weight:400;transform:scaleX(0.9649);-webkit-text-stroke:0.45px #4d4d4d;">2018-07-03</div>
<div id="d2_5" class="t" style="left:811.70px;top:786.71px;font-size:27.2px;color:#4d4d4d;font-weight:400;transform:scaleX(0.9720);-webkit-text-stroke:0.45px #4d4d4d;">13:10:48</div>
<div id="rp5" class="t" style="left:986.80px;top:756.81px;font-size:27.2px;color:#4d4d4d;font-weight:400;transform:scaleX(0.9571);-webkit-text-stroke:0.45px #4d4d4d;">Anurag Prasad</div>
<div id="ac5" class="t" style="left:1253.10px;top:756.81px;font-size:27.2px;color:#4d4d4d;font-weight:400;transform:scaleX(0.9708);-webkit-text-stroke:0.45px #4d4d4d;">Test Update 176</div>
<div class="r" style="left:1792px;top:756px;width:233px;height:56px;box-sizing:border-box;border:2px solid #c4c4c4;border-radius:5px;background:linear-gradient(#fcfcfc,#ececec);box-shadow:0 2px 2px rgba(0,0,0,0.06);"></div>
<div class="r" style="left:1972px;top:758px;width:2px;height:52px;background:#cfcfcf;"></div>
<div id="st5" class="t" style="left:1813.00px;top:772.71px;font-size:24.75px;color:#222;font-weight:400;transform:scaleX(0.9557);-webkit-text-stroke:0.45px #222;">Unapproved</div>
<svg class="r" style="left:1992px;top:779.6px" width="14" height="9" viewBox="0 0 14 8"><polygon points="0,0 14,0 7,8" fill="#777"/></svg>
<div class="r" style="left:2048px;top:760px;width:46px;height:42px;box-sizing:border-box;border:2px solid #b5b5b5;border-radius:5px;background:linear-gradient(#fbfbfb,#e5e5e5);"></div>
<svg class="r" style="left:2061px;top:768px" width="21" height="25" viewBox="0 0 21 25"><path d="M2.6 1.6 H13.4 L18.8 7.0 V21.7 A1.3 1.3 0 0 1 17.5 23.0 H2.6 A1.3 1.3 0 0 1 1.3 21.7 V2.9 A1.3 1.3 0 0 1 2.6 1.6 Z" fill="none" stroke="#5a5a5a" stroke-width="1.5"/><path d="M13.0 1.6 V7.0 H18.8" fill="none" stroke="#5a5a5a" stroke-width="1.5"/><path d="M9.2 4.8 C8.9 7 9.6 9.6 10.6 11.5 C11.8 13.4 14 14.5 17.0 14.6 M16.8 14.7 C13.5 14.2 10.5 14.8 7.3 15.6 M10.0 10.8 C9 13.6 7.2 16.6 3.6 19.2" fill="none" stroke="#5a5a5a" stroke-width="1.4"/><ellipse cx="9.1" cy="5.2" rx="0.9" ry="1.1" fill="#5a5a5a"/><ellipse cx="16.6" cy="14.6" rx="1.3" ry="0.9" fill="#5a5a5a"/><ellipse cx="4.0" cy="18.9" rx="1.2" ry="0.9" transform="rotate(-40 4 18.9)" fill="#5a5a5a"/></svg>
<div class="r" style="left:2134px;top:760px;width:66px;height:46px;box-sizing:border-box;border:2px solid #b5b5b5;border-radius:5px;background:linear-gradient(#fbfbfb,#e5e5e5);"></div>
<svg class="r" style="left:2145px;top:771.5px" width="24" height="19" viewBox="0 0 24 19"><rect x="0.8" y="0.5" width="22.6" height="18" rx="1.6" fill="#5a5a5a"/><polyline points="0.8,5 12.1,12 23.4,5" fill="none" stroke="#f3f3f3" stroke-width="1.2"/></svg>
<div class="r" style="left:2240px;top:760px;width:74px;height:42px;box-sizing:border-box;border:2px solid #5a9a31;border-radius:5px;background:linear-gradient(#98c566,#5f9a3a);"></div>
<div id="v5" class="t" style="left:2252.60px;top:768.91px;font-size:23.5px;color:#ffffff;font-weight:700;transform:scaleX(0.9087);-webkit-text-stroke:0.5px #ffffff;text-shadow:0 -1px 0 rgba(0,0,0,0.15);">View</div>
<div class="r" style="left:42px;top:826px;width:34px;height:40px;box-sizing:border-box;border:2px solid #8eabcb;border-radius:5px;background:linear-gradient(#a6cee1,#8fadcc);"></div>
<div class="r" style="left:53.4px;top:843.2px;width:11px;height:3.6px;background:#fff;"></div>
<div class="r" style="left:57.2px;top:839.1px;width:3.6px;height:11.8px;background:#fff;"></div>
<div class="r" style="left:106px;top:822px;width:84px;height:40px;background:#657b95;border-radius:5px;"></div>
<div id="b6" class="t" style="left:116.10px;top:829.00px;font-size:24.6px;color:#ffffff;font-weight:700;transform:scaleX(0.9418);-webkit-text-stroke:0.35px #ffffff;text-shadow:0 -1px 0 rgba(0,0,0,0.25);">#6005</div>
<div id="ty6" class="t" style="left:219.00px;top:824.71px;font-size:30.6px;color:#555;font-weight:700;transform:scaleX(1.0004);-webkit-text-stroke:0.2px #555;">1234</div>
<div id="d1_6" class="t" style="left:811.80px;top:822.81px;font-size:27.2px;color:#4d4d4d;font-weight:400;transform:scaleX(0.9720);-webkit-text-stroke:0.45px #4d4d4d;">2018-06-29</div>
<div id="d2_6" class="t" style="left:811.70px;top:852.71px;font-size:27.2px;color:#4d4d4d;font-weight:400;transform:scaleX(0.9723);-webkit-text-stroke:0.45px #4d4d4d;">15:47:32</div>
<div id="rp6" class="t" style="left:986.80px;top:822.81px;font-size:27.2px;color:#4d4d4d;font-weight:400;transform:scaleX(0.9945);-webkit-text-stroke:0.45px #4d4d4d;">Administrator</div>
<div id="ac6" class="t" style="left:1251.10px;top:822.81px;font-size:27.2px;color:#4d4d4d;font-weight:400;transform:scaleX(0.9685);-webkit-text-stroke:0.45px #4d4d4d;">Richard Clientelle</div>
<div class="r" style="left:1792px;top:822px;width:233px;height:56px;box-sizing:border-box;border:2px solid #c4c4c4;border-radius:5px;background:linear-gradient(#fcfcfc,#ececec);box-shadow:0 2px 2px rgba(0,0,0,0.06);"></div>
<div class="r" style="left:1972px;top:824px;width:2px;height:52px;background:#cfcfcf;"></div>
<div id="st6" class="t" style="left:1813.00px;top:838.71px;font-size:24.75px;color:#222;font-weight:400;transform:scaleX(0.9557);-webkit-text-stroke:0.45px #222;">Unapproved</div>
<svg class="r" style="left:1992px;top:845.6px" width="14" height="9" viewBox="0 0 14 8"><polygon points="0,0 14,0 7,8" fill="#777"/></svg>
<div class="r" style="left:2048px;top:826px;width:46px;height:42px;box-sizing:border-box;border:2px solid #b5b5b5;border-radius:5px;background:linear-gradient(#fbfbfb,#e5e5e5);"></div>
<svg class="r" style="left:2061px;top:834px" width="21" height="25" viewBox="0 0 21 25"><path d="M2.6 1.6 H13.4 L18.8 7.0 V21.7 A1.3 1.3 0 0 1 17.5 23.0 H2.6 A1.3 1.3 0 0 1 1.3 21.7 V2.9 A1.3 1.3 0 0 1 2.6 1.6 Z" fill="none" stroke="#5a5a5a" stroke-width="1.5"/><path d="M13.0 1.6 V7.0 H18.8" fill="none" stroke="#5a5a5a" stroke-width="1.5"/><path d="M9.2 4.8 C8.9 7 9.6 9.6 10.6 11.5 C11.8 13.4 14 14.5 17.0 14.6 M16.8 14.7 C13.5 14.2 10.5 14.8 7.3 15.6 M10.0 10.8 C9 13.6 7.2 16.6 3.6 19.2" fill="none" stroke="#5a5a5a" stroke-width="1.4"/><ellipse cx="9.1" cy="5.2" rx="0.9" ry="1.1" fill="#5a5a5a"/><ellipse cx="16.6" cy="14.6" rx="1.3" ry="0.9" fill="#5a5a5a"/><ellipse cx="4.0" cy="18.9" rx="1.2" ry="0.9" transform="rotate(-40 4 18.9)" fill="#5a5a5a"/></svg>
<div class="r" style="left:2134px;top:826px;width:66px;height:46px;box-sizing:border-box;border:2px solid #b5b5b5;border-radius:5px;background:linear-gradient(#fbfbfb,#e5e5e5);"></div>
<svg class="r" style="left:2145px;top:837.5px" width="24" height="19" viewBox="0 0 24 19"><rect x="0.8" y="0.5" width="22.6" height="18" rx="1.6" fill="#5a5a5a"/><polyline points="0.8,5 12.1,12 23.4,5" fill="none" stroke="#f3f3f3" stroke-width="1.2"/></svg>
<div class="r" style="left:2240px;top:826px;width:74px;height:42px;box-sizing:border-box;border:2px solid #5a9a31;border-radius:5px;background:linear-gradient(#98c566,#5f9a3a);"></div>
<div id="v6" class="t" style="left:2252.60px;top:834.91px;font-size:23.5px;color:#ffffff;font-weight:700;transform:scaleX(0.9087);-webkit-text-stroke:0.5px #ffffff;text-shadow:0 -1px 0 rgba(0,0,0,0.15);">View</div>
<div class="r" style="left:42px;top:892px;width:34px;height:40px;box-sizing:border-box;border:2px solid #8eabcb;border-radius:5px;background:linear-gradient(#a6cee1,#8fadcc);"></div>
<div class="r" style="left:53.4px;top:909.2px;width:11px;height:3.6px;background:#fff;"></div>
<div class="r" style="left:57.2px;top:905.1px;width:3.6px;height:11.8px;background:#fff;"></div>
<div class="r" style="left:106px;top:888px;width:84px;height:40px;background:#657b95;border-radius:5px;"></div>
<div id="b7" class="t" style="left:116.10px;top:895.00px;font-size:24.6px;color:#ffffff;font-weight:700;transform:scaleX(0.9271);-webkit-text-stroke:0.35px #ffffff;text-shadow:0 -1px 0 rgba(0,0,0,0.25);">#6004</div>
<div id="ty7" class="t" style="left:219.00px;top:890.71px;font-size:30.6px;color:#555;font-weight:700;transform:scaleX(1.0004);-webkit-text-stroke:0.2px #555;">1234</div>
<div id="d1_7" class="t" style="left:811.80px;top:888.81px;font-size:27.2px;color:#4d4d4d;font-weight:400;transform:scaleX(0.9720);-webkit-text-stroke:0.45px #4d4d4d;">2018-06-29</div>
<div id="d2_7" class="t" style="left:811.70px;top:918.71px;font-size:27.2px;color:#4d4d4d;font-weight:400;transform:scaleX(0.9723);-webkit-text-stroke:0.45px #4d4d4d;">15:44:32</div>
<div id="rp7" class="t" style="left:986.80px;top:888.81px;font-size:27.2px;color:#4d4d4d;font-weight:400;transform:scaleX(0.9945);-webkit-text-stroke:0.45px #4d4d4d;">Administrator</div>
<div id="ac7" class="t" style="left:1251.10px;top:888.81px;font-size:27.2px;color:#4d4d4d;font-weight:400;transform:scaleX(0.9685);-webkit-text-stroke:0.45px #4d4d4d;">Richard Clientelle</div>
<div class="r" style="left:1792px;top:888px;width:233px;height:56px;box-sizing:border-box;border:2px solid #c4c4c4;border-radius:5px;background:linear-gradient(#fcfcfc,#ececec);box-shadow:0 2px 2px rgba(0,0,0,0.06);"></div>
<div class="r" style="left:1972px;top:890px;width:2px;height:52px;background:#cfcfcf;"></div>
<div id="st7" class="t" style="left:1813.00px;top:904.71px;font-size:24.75px;color:#222;font-weight:400;transform:scaleX(0.9557);-webkit-text-stroke:0.45px #222;">Unapproved</div>
<svg class="r" style="left:1992px;top:911.6px" width="14" height="9" viewBox="0 0 14 8"><polygon points="0,0 14,0 7,8" fill="#777"/></svg>
<div class="r" style="left:2048px;top:892px;width:46px;height:42px;box-sizing:border-box;border:2px solid #b5b5b5;border-radius:5px;background:linear-gradient(#fbfbfb,#e5e5e5);"></div>
<svg class="r" style="left:2061px;top:900px" width="21" height="25" viewBox="0 0 21 25"><path d="M2.6 1.6 H13.4 L18.8 7.0 V21.7 A1.3 1.3 0 0 1 17.5 23.0 H2.6 A1.3 1.3 0 0 1 1.3 21.7 V2.9 A1.3 1.3 0 0 1 2.6 1.6 Z" fill="none" stroke="#5a5a5a" stroke-width="1.5"/><path d="M13.0 1.6 V7.0 H18.8" fill="none" stroke="#5a5a5a" stroke-width="1.5"/><path d="M9.2 4.8 C8.9 7 9.6 9.6 10.6 11.5 C11.8 13.4 14 14.5 17.0 14.6 M16.8 14.7 C13.5 14.2 10.5 14.8 7.3 15.6 M10.0 10.8 C9 13.6 7.2 16.6 3.6 19.2" fill="none" stroke="#5a5a5a" stroke-width="1.4"/><ellipse cx="9.1" cy="5.2" rx="0.9" ry="1.1" fill="#5a5a5a"/><ellipse cx="16.6" cy="14.6" rx="1.3" ry="0.9" fill="#5a5a5a"/><ellipse cx="4.0" cy="18.9" rx="1.2" ry="0.9" transform="rotate(-40 4 18.9)" fill="#5a5a5a"/></svg>
<div class="r" style="left:2134px;top:892px;width:66px;height:46px;box-sizing:border-box;border:2px solid #b5b5b5;border-radius:5px;background:linear-gradient(#fbfbfb,#e5e5e5);"></div>
<svg class="r" style="left:2145px;top:903.5px" width="24" height="19" viewBox="0 0 24 19"><rect x="0.8" y="0.5" width="22.6" height="18" rx="1.6" fill="#5a5a5a"/><polyline points="0.8,5 12.1,12 23.4,5" fill="none" stroke="#f3f3f3" stroke-width="1.2"/></svg>
<div class="r" style="left:2240px;top:892px;width:74px;height:42px;box-sizing:border-box;border:2px solid #5a9a31;border-radius:5px;background:linear-gradient(#98c566,#5f9a3a);"></div>
<div id="v7" class="t" style="left:2252.60px;top:900.91px;font-size:23.5px;color:#ffffff;font-weight:700;transform:scaleX(0.9087);-webkit-text-stroke:0.5px #ffffff;text-shadow:0 -1px 0 rgba(0,0,0,0.15);">View</div>
<div class="r" style="left:42px;top:958px;width:34px;height:40px;box-sizing:border-box;border:2px solid #8eabcb;border-radius:5px;background:linear-gradient(#a6cee1,#8fadcc);"></div>
<div class="r" style="left:53.4px;top:975.2px;width:11px;height:3.6px;background:#fff;"></div>
<div class="r" style="left:57.2px;top:971.1px;width:3.6px;height:11.8px;background:#fff;"></div>
<div class="r" style="left:106px;top:954px;width:84px;height:40px;background:#657b95;border-radius:5px;"></div>
<div id="b8" class="t" style="left:116.10px;top:961.00px;font-size:24.6px;color:#ffffff;font-weight:700;transform:scaleX(0.9409);-webkit-text-stroke:0.35px #ffffff;text-shadow:0 -1px 0 rgba(0,0,0,0.25);">#6003</div>
<div id="ty8" class="t" style="left:219.00px;top:956.71px;font-size:30.6px;color:#555;font-weight:700;transform:scaleX(0.8916);-webkit-text-stroke:0.2px #555;">Disp Task 1</div>
<div id="d1_8" class="t" style="left:811.80px;top:954.81px;font-size:27.2px;color:#4d4d4d;font-weight:400;transform:scaleX(0.9720);-webkit-text-stroke:0.45px #4d4d4d;">2018-06-29</div>
<div id="d2_8" class="t" style="left:811.70px;top:984.71px;font-size:27.2px;color:#4d4d4d;font-weight:400;transform:scaleX(0.9722);-webkit-text-stroke:0.45px #4d4d4d;">14:17:29</div>
<div id="rp8" class="t" style="left:984.80px;top:954.81px;font-size:27.2px;color:#4d4d4d;font-weight:400;transform:scaleX(0.9632);-webkit-text-stroke:0.45px #4d4d4d;">Kate Employee</div>
<div id="ac8" class="t" style="left:1251.10px;top:954.81px;font-size:27.2px;color:#4d4d4d;font-weight:400;transform:scaleX(0.9634);-webkit-text-stroke:0.45px #4d4d4d;">Kate Client</div>
<div class="r" style="left:1792px;top:954px;width:233px;height:56px;box-sizing:border-box;border:2px solid #c4c4c4;border-radius:5px;background:linear-gradient(#fcfcfc,#ececec);box-shadow:0 2px 2px rgba(0,0,0,0.06);"></div>
<div class="r" style="left:1972px;top:956px;width:2px;height:52px;background:#cfcfcf;"></div>
<div id="st8" class="t" style="left:1813.00px;top:970.71px;font-size:24.75px;color:#222;font-weight:400;transform:scaleX(0.9557);-webkit-text-stroke:0.45px #222;">Unapproved</div>
<svg class="r" style="left:1992px;top:977.6px" width="14" height="9" viewBox="0 0 14 8"><polygon points="0,0 14,0 7,8" fill="#777"/></svg>
<div class="r" style="left:2048px;top:958px;width:46px;height:42px;box-sizing:border-box;border:2px solid #b5b5b5;border-radius:5px;background:linear-gradient(#fbfbfb,#e5e5e5);"></div>
<svg class="r" style="left:2061px;top:966px" width="21" height="25" viewBox="0 0 21 25"><path d="M2.6 1.6 H13.4 L18.8 7.0 V21.7 A1.3 1.3 0 0 1 17.5 23.0 H2.6 A1.3 1.3 0 0 1 1.3 21.7 V2.9 A1.3 1.3 0 0 1 2.6 1.6 Z" fill="none" stroke="#5a5a5a" stroke-width="1.5"/><path d="M13.0 1.6 V7.0 H18.8" fill="none" stroke="#5a5a5a" stroke-width="1.5"/><path d="M9.2 4.8 C8.9 7 9.6 9.6 10.6 11.5 C11.8 13.4 14 14.5 17.0 14.6 M16.8 14.7 C13.5 14.2 10.5 14.8 7.3 15.6 M10.0 10.8 C9 13.6 7.2 16.6 3.6 19.2" fill="none" stroke="#5a5a5a" stroke-width="1.4"/><ellipse cx="9.1" cy="5.2" rx="0.9" ry="1.1" fill="#5a5a5a"/><ellipse cx="16.6" cy="14.6" rx="1.3" ry="0.9" fill="#5a5a5a"/><ellipse cx="4.0" cy="18.9" rx="1.2" ry="0.9" transform="rotate(-40 4 18.9)" fill="#5a5a5a"/></svg>
<div class="r" style="left:2134px;top:958px;width:66px;height:46px;box-sizing:border-box;border:2px solid #b5b5b5;border-radius:5px;background:linear-gradient(#fbfbfb,#e5e5e5);"></div>
<svg class="r" style="left:2145px;top:969.5px" width="24" height="19" viewBox="0 0 24 19"><rect x="0.8" y="0.5" width="22.6" height="18" rx="1.6" fill="#5a5a5a"/><polyline points="0.8,5 12.1,12 23.4,5" fill="none" stroke="#f3f3f3" stroke-width="1.2"/></svg>
<div class="r" style="left:2240px;top:958px;width:74px;height:42px;box-sizing:border-box;border:2px solid #5a9a31;border-radius:5px;background:linear-gradient(#98c566,#5f9a3a);"></div>
<div id="v8" class="t" style="left:2252.60px;top:966.91px;font-size:23.5px;color:#ffffff;font-weight:700;transform:scaleX(0.9087);-webkit-text-stroke:0.5px #ffffff;text-shadow:0 -1px 0 rgba(0,0,0,0.15);">View</div>
</body></html>
